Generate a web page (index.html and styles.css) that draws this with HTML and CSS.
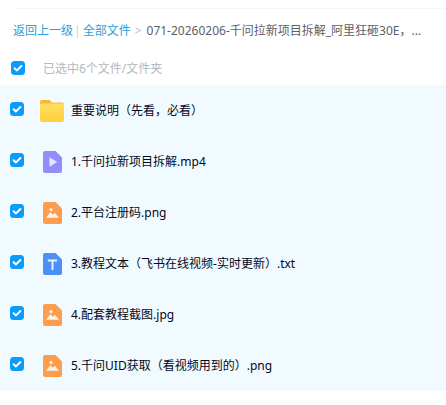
FILE: index.html
```html
<!DOCTYPE html>
<html lang="zh-CN">
<head>
    <meta charset="UTF-8">
    <meta name="viewport" content="width=device-width, initial-scale=1.0">
    <title>全部文件</title>
    <link rel="stylesheet" href="styles.css">
</head>
<body>
    <svg class="icon-defs" width="0" height="0">
        <defs>
            <linearGradient id="folder-front" x1="0" y1="0" x2="0" y2="1">
                <stop offset="0" stop-color="#ffe05f"/>
                <stop offset="1" stop-color="#ffcf3d"/>
            </linearGradient>
            <symbol id="check" viewBox="0 0 14 14">
                <rect width="14" height="14" rx="3.5" fill="#0d9bfb"/>
                <path d="M3.600 7.200 6 9.400 10.400 5" fill="none" stroke="#fff" stroke-width="2" stroke-linecap="round" stroke-linejoin="round"/>
            </symbol>
            <symbol id="folder" viewBox="0 0 24 22">
                <path d="M2 0h7.500l2.500 2.500h10a2 2 0 0 1 2 2V8H0V2a2 2 0 0 1 2-2z" fill="#f9b92e"/>
                <path d="M2 3.500h20a2 2 0 0 1 2 2V20a2 2 0 0 1-2 2H2a2 2 0 0 1-2-2V5.500a2 2 0 0 1 2-2z" fill="url(#folder-front)"/>
            </symbol>
            <symbol id="video" viewBox="0 0 19 22">
                <path d="M2 0h10.500L19 6.500V20a2 2 0 0 1-2 2H2a2 2 0 0 1-2-2V2a2 2 0 0 1 2-2z" fill="#8f8efb"/>
                <path d="M6.500 6.300v9.400l7.700-4.700z" fill="#e6e4ff"/>
            </symbol>
            <symbol id="image" viewBox="0 0 19 22">
                <path d="M2 0h10.500L19 6.500V20a2 2 0 0 1-2 2H2a2 2 0 0 1-2-2V2a2 2 0 0 1 2-2z" fill="#ff9d4f"/>
                <circle cx="8" cy="7.600" r="1.600" fill="#fff2e6"/>
                <path d="M3 15.800 7.300 10.300 9.800 12.800 11.700 10.800 16 15.800z" fill="#fff2e6"/>
            </symbol>
            <symbol id="text" viewBox="0 0 19 22">
                <path d="M2 0h10.500L19 6.500V20a2 2 0 0 1-2 2H2a2 2 0 0 1-2-2V2a2 2 0 0 1 2-2z" fill="#4a90f7"/>
                <path d="M4.800 6.500h9.400v2h-3.700v8.500h-2V8.500H4.800z" fill="#e8f2ff"/>
            </symbol>
        </defs>
    </svg>

    <div class="top-line"></div>

    <div class="crumbs">
        <a class="crumb-link">返回上一级</a>
        <span class="crumb-bar">|</span>
        <a class="crumb-link">全部文件</a>
        <span class="crumb-sep">&gt;</span>
        <span class="crumb-current">071-20260206-千问拉新项目拆解_阿里狂砸30E，...</span>
    </div>

    <div class="select-bar">
        <svg class="check"><use href="#check"/></svg>
        <span class="select-text">已选中6个文件/文件夹</span>
    </div>

    <ul class="file-list">
        <li class="file-row">
            <svg class="check"><use href="#check"/></svg>
            <span class="icon-slot"><svg class="icon-folder"><use href="#folder"/></svg></span>
            <span class="file-name">重要说明（先看，必看）</span>
        </li>
        <li class="file-row">
            <svg class="check"><use href="#check"/></svg>
            <span class="icon-slot"><svg class="icon-file"><use href="#video"/></svg></span>
            <span class="file-name">1.千问拉新项目拆解.mp4</span>
        </li>
        <li class="file-row">
            <svg class="check"><use href="#check"/></svg>
            <span class="icon-slot"><svg class="icon-file"><use href="#image"/></svg></span>
            <span class="file-name">2.平台注册码.png</span>
        </li>
        <li class="file-row">
            <svg class="check"><use href="#check"/></svg>
            <span class="icon-slot"><svg class="icon-file"><use href="#text"/></svg></span>
            <span class="file-name">3.教程文本（飞书在线视频-实时更新）.txt</span>
        </li>
        <li class="file-row">
            <svg class="check"><use href="#check"/></svg>
            <span class="icon-slot"><svg class="icon-file"><use href="#image"/></svg></span>
            <span class="file-name">4.配套教程截图.jpg</span>
        </li>
        <li class="file-row">
            <svg class="check"><use href="#check"/></svg>
            <span class="icon-slot"><svg class="icon-file"><use href="#image"/></svg></span>
            <span class="file-name">5.千问UID获取（看视频用到的）.png</span>
        </li>
    </ul>
</body>
</html>
```

FILE: styles.css
```css
body {
    margin: 0;
    padding: 0;
    height: 405px;
    overflow: hidden;
    background: #fff;
    font-family: "Noto Sans", "Noto Sans CJK SC", sans-serif;
    font-size: 12px;
    color: #03081a;
}

.icon-defs {
    position: absolute;
}

.top-line {
    height: 1px;
    margin: 8px 0 0 16px;
    background: #f5f5f6;
}

.crumbs {
    display: flex;
    align-items: center;
    height: 20px;
    margin-top: 11px;
    padding-left: 13px;
    white-space: nowrap;
    color: #5e6066;
}

.crumb-link {
    color: #2a9fd8;
}

.crumb-bar {
    margin: 0 2px 0 1px;
    color: #c9d3da;
}

.crumb-sep {
    margin: 0 5px 0 4px;
    color: #b9bcc2;
}

.select-bar {
    display: flex;
    align-items: center;
    height: 14px;
    margin-top: 21px;
    padding-left: 11px;
}

.select-text {
    margin-left: 18px;
    color: #b4b8c0;
}

.check {
    flex: none;
    width: 14px;
    height: 14px;
}

.file-list {
    list-style: none;
    margin: 10px 0 0;
    padding: 0;
    background: #f1faff;
}

.file-row {
    display: flex;
    align-items: center;
    box-sizing: border-box;
    height: 51px;
    padding: 0 0 3px 10px;
}

.icon-slot {
    display: flex;
    justify-content: center;
    flex: none;
    width: 24px;
    margin: 3px 7px 0 16px;
}

.icon-folder {
    width: 24px;
    height: 22px;
}

.icon-file {
    width: 19px;
    height: 22px;
}

.file-name {
    padding-top: 2px;
    white-space: nowrap;
}
```
